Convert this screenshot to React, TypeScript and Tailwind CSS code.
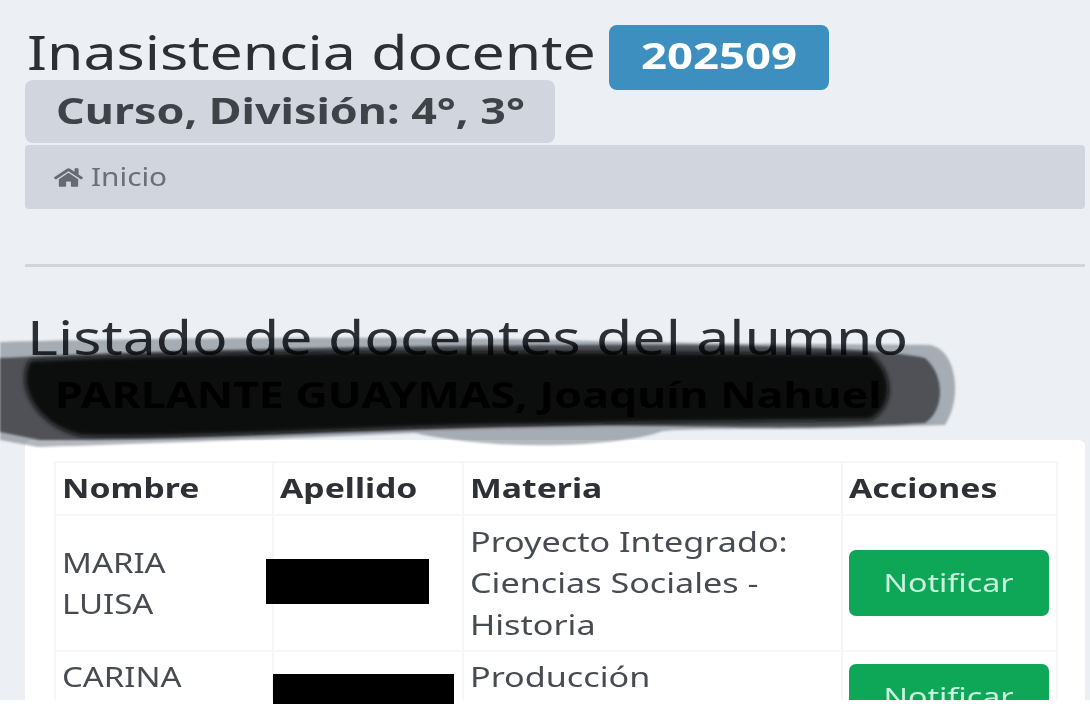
import React from "react";
import { FaHome } from "react-icons/fa";

/* The reference is a horizontally stretched photo of the page, so text is widened from its left edge. */
function Wide({ children }: { children: React.ReactNode }) {
  return <span className="inline-block origin-left scale-x-[1.265] whitespace-nowrap">{children}</span>;
}

function Btn() {
  return (
    <div className="flex h-[66px] w-[200px] items-center justify-center rounded-[7px] bg-[#0ea657] text-[26px] text-[#c9f3dd]">
      <span className="inline-block origin-center scale-x-[1.24] whitespace-nowrap">Notificar</span>
    </div>
  );
}

const cell = "border-2 border-[#f5f6f7] pl-[6px]";
const last = "border-2 border-b-0 border-[#f5f6f7] pl-[6px] align-top";

export default function App() {
  return (
    <div className="relative h-[704px] w-[1090px] overflow-hidden bg-white font-['Noto_Sans',sans-serif]">
      <div className="h-[700px] overflow-hidden bg-[#ecf0f5] px-[25px] pt-[25px]">
        <div className="flex h-[55px] items-start">
          <h1 className="ml-[2px] w-[582px] text-[47px] leading-[54px] text-[#2c3035]">
            <span className="inline-block origin-left scale-x-[1.255] whitespace-nowrap">Inasistencia docente</span>
          </h1>
          <span className="flex h-[65px] w-[220px] items-center justify-center rounded-[8px] bg-[#3d8fc0] pb-[2px] text-[35px] font-bold text-white">
            <span className="inline-block origin-center scale-x-[1.3] whitespace-nowrap">202509</span>
          </span>
        </div>
        <div className="flex h-[63px] w-[530px] items-start rounded-[8px] bg-[#d1d5de] pl-[31px] pt-[8px] text-[35px] font-bold leading-[46px] text-[#3f4348]">
          <span className="inline-block origin-left scale-x-[1.28] whitespace-nowrap">Curso, División: 4°, 3°</span>
        </div>
        <div className="mt-[2px] flex h-[64px] w-[1060px] items-center gap-[8px] rounded-[4px] bg-[#d1d5de] pl-[29px] text-[25px] text-[#6b7075]">
          <FaHome className="h-[21px] w-[29px] text-[#666b70]" preserveAspectRatio="none" />
          <span className="inline-block origin-left scale-x-[1.19] whitespace-nowrap">Inicio</span>
        </div>
        <div className="mt-[55px] h-[3px] w-[1060px] bg-[#d2d4d8]" />
        <h2 className="ml-[2px] mt-[40px] text-[47px] leading-[60px] text-[#2c3035]">
          <span className="inline-block origin-left scale-x-[1.255] whitespace-nowrap">Listado de docentes del alumno</span>
        </h2>
        <div className="ml-[30px] h-[73px] pt-[3px] text-[35px] font-bold leading-[50px] text-black">
          <span className="inline-block origin-left scale-x-[1.277] whitespace-nowrap">PARLANTE GUAYMAS, Joaquín Nahuel</span>
        </div>
        <div className="h-[300px] w-[1060px] rounded-t-[6px] bg-white pl-[29px] pt-[21px]">
          <table className="w-[1002px] table-fixed border-collapse text-[27px] text-[#474c52]">
            <colgroup>
              <col className="w-[218px]" />
              <col className="w-[190px]" />
              <col className="w-[379px]" />
              <col className="w-[215px]" />
            </colgroup>
            <thead>
              <tr className="h-[53px] font-bold text-[#2d3136]">
                <th className={`${cell} text-left`}><span className="inline-block origin-left scale-x-[1.25] whitespace-nowrap">Nombre</span></th>
                <th className={`${cell} text-left`}><span className="inline-block origin-left scale-x-[1.25] whitespace-nowrap">Apellido</span></th>
                <th className={`${cell} text-left`}><span className="inline-block origin-left scale-x-[1.25] whitespace-nowrap">Materia</span></th>
                <th className={`${cell} text-left`}><span className="inline-block origin-left scale-x-[1.25] whitespace-nowrap">Acciones</span></th>
              </tr>
            </thead>
            <tbody className="leading-[41.5px]">
              <tr className="h-[136px]">
                <td className={cell}><span className="inline-block origin-left scale-x-[1.22] whitespace-nowrap">MARIA<br />LUISA</span></td>
                <td className={cell} />
                <td className={cell}><Wide>Proyecto Integrado:<br />Ciencias Sociales -<br />Historia</Wide></td>
                <td className={cell}><Btn /></td>
              </tr>
              <tr>
                <td className={`${last} pt-[4px]`}><span className="inline-block origin-left scale-x-[1.22] whitespace-nowrap">CARINA</span></td>
                <td className={last} />
                <td className={`${last} pt-[4px]`}><Wide>Producción</Wide></td>
                <td className={`${last} pt-[12px]`}><Btn /></td>
              </tr>
            </tbody>
          </table>
        </div>
      </div>
      {/* redaction overlays */}
      <div className="absolute left-[266px] top-[559px] h-[45px] w-[163px] bg-black" />
      <div className="absolute left-[273px] top-[674px] h-[30px] w-[181px] bg-black" />
      <svg className="absolute left-0 top-[330px] mix-blend-multiply" width="1090" height="130" viewBox="0 330 1090 130" fill="none">
        <defs>
          <filter id="soft" x="-5%" y="-20%" width="110%" height="140%">
            <feGaussianBlur stdDeviation="1.2" />
          </filter>
          <filter id="softer" x="-5%" y="-20%" width="110%" height="140%">
            <feGaussianBlur stdDeviation="2.5" />
          </filter>
        </defs>
        <path filter="url(#soft)" d="M0 342 C150 338 400 336 560 340 C700 344 850 344 930 345 C958 350 962 400 945 425 L850 428 C780 430 700 428 663 431 C620 447 500 452 415 433 C300 438 120 445 38 447 L0 440 Z" fill="#b4b7bb" />
        <path filter="url(#soft)" d="M0 358 C200 348 500 344 700 345 C800 346 890 350 925 358 C945 375 945 410 925 423 C800 430 750 427 600 425 C400 428 200 440 40 440 L0 432 Z" fill="#55575a" />
        <path filter="url(#softer)" d="M30 360 C250 350 500 350 870 354 C895 372 895 408 870 420 C700 422 500 424 350 430 C250 434 150 438 80 436 C35 425 15 385 30 360 Z" fill="#0a0a0b" />
      </svg>
    </div>
  );
}
